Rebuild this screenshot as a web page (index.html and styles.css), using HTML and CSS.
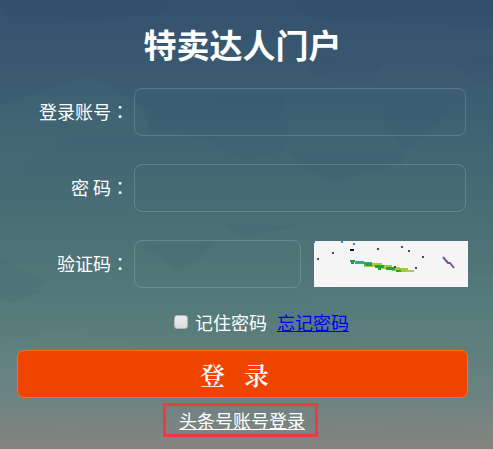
FILE: index.html
```html
<!DOCTYPE html>
<html lang="zh-CN">
<head>
    <meta charset="utf-8">
    <title>特卖达人门户</title>
    <link rel="stylesheet" href="styles.css">
</head>
<body>
    <!-- faceted backdrop -->
    <svg class="backdrop" viewBox="0 0 493 449" preserveAspectRatio="none" aria-hidden="true">
        <g fill="#243f68" fill-opacity="0.06">
            <polygon points="0,0 173,0 160,15 63,22 50,33 10,30"/>
            <polygon points="290,0 493,0 493,28 420,24 310,18"/>
            <polygon points="310,55 385,62 372,84 340,84 308,72"/>
            <polygon points="450,62 493,54 493,80 478,84"/>
            <polygon points="378,108 455,108 404,152"/>
            <polygon points="140,104 285,95 288,136 285,150 245,161 205,138 150,130"/>
            <polygon points="288,152 404,152 402,164 335,181 300,168"/>
            <polygon points="145,246 212,242 202,258 177,271"/>
            <polygon points="225,225 300,225 243,238"/>
            <polygon points="0,260 45,280 40,292 12,302 0,300"/>
        </g>
        <g fill="#8ba690" fill-opacity="0.04">
            <polygon points="0,105 90,75 150,112 145,135 70,138 0,180"/>
            <polygon points="300,290 493,275 493,345 355,345"/>
            <polygon points="0,345 60,330 135,344 160,400 70,430 0,410"/>
            <polygon points="317,400 400,400 380,430 330,425"/>
            <polygon points="430,400 493,400 493,435 445,420"/>
        </g>
    </svg>

    <form class="login">
        <h1>特卖达人门户</h1>

        <div class="row">
            <label for="account">登录账号<span class="colon" lang="zh-TW">：</span></label>
            <input type="text" id="account" class="field">
        </div>
        <div class="row">
            <label for="password">密 码<span class="colon" lang="zh-TW">：</span></label>
            <input type="password" id="password" class="field">
        </div>
        <div class="row row-code">
            <label for="code">验证码<span class="colon" lang="zh-TW">：</span></label>
            <input type="text" id="code" class="field">
            <svg class="captcha" viewBox="0 0 154 46" role="img" aria-label="验证码">
                <rect width="154" height="46" fill="#f5f5f5"/>
                <path d="M50 21h8v1h10v2h10v2h8v1h8v2h6v2h-14v-1h-8v-2h-11v-2h-17z" fill="#a9c832"/>
                <path d="M41 20h9v1h8v3h-8v-1h-9z" fill="#2fae7b"/>
                <path d="M36 19h5v2h-1v2h-3v-2h-1z" fill="#1c9b58"/>
                <path d="M51 22h7v3h-6v-1h-1zM61 24h9v3h-3v2h-3v-2h-3zM72 26h9v3h-9zM82 29h5v2h-5z" fill="#27a33c"/>
                <path d="M93 29h7v2h-7z" fill="#c8b76a"/>
                <path d="M129 16l5 6h2l4 5" fill="none" stroke="#7a529a" stroke-width="2"/>
                <path d="M36 8h4v2h-4z" fill="#15103c"/>
                <g fill="#58406e">
                    <rect x="3" y="17" width="2" height="2"/>
                    <rect x="18" y="11" width="2" height="2"/>
                    <rect x="63" y="7" width="2" height="2"/>
                    <rect x="87" y="5" width="2" height="2"/>
                    <rect x="94" y="9" width="2" height="2"/>
                    <rect x="108" y="15" width="2" height="2"/>
                    <rect x="101" y="26" width="2" height="2"/>
                    <rect x="80" y="25" width="2" height="2"/>
                </g>
                <g fill="#3f7fae">
                    <rect x="27" y="0" width="2" height="2"/>
                    <rect x="39" y="2" width="2" height="2"/>
                    <rect x="0" y="0" width="1" height="2"/>
                </g>
            </svg>
        </div>

        <div class="options">
            <input type="checkbox" id="remember">
            <label for="remember">记住密码</label>
            <a href="#">忘记密码</a>
        </div>

        <button type="submit">登&nbsp;&nbsp; 录</button>

        <a class="other-login" href="#">头条号账号登录</a>
    </form>
</body>
</html>
```
FILE: styles.css
```css
* {
    box-sizing: border-box;
}
html {
    min-height: 100%;
    background: linear-gradient(#34506e 0%, #3d6072 25%, #4a7075 50%, #557b7b 70%, #6b8380 88%, #878380 100%);
}
body {
    margin: 0;
    color: #fff;
    font: 18px/24px "Noto Sans CJK SC", sans-serif;
}
.backdrop {
    position: absolute;
    top: 0;
    left: 0;
    width: 100%;
    height: 100%;
    z-index: -1;
}
.login {
    display: flex;
    flex-direction: column;
    padding: 20px 25px 12px 17px;
}
h1 {
    margin: 0 0 20px;
    font-size: 33px;
    line-height: 48px;
    text-align: center;
}
.row {
    display: grid;
    grid-template-columns: 112px 1fr;
    column-gap: 5px;
    align-items: center;
    margin-bottom: 28px;
    padding-right: 2px;
}
.row-code {
    grid-template-columns: 112px 1fr auto;
    margin-bottom: 16px;
    padding-right: 0;
}
.row label {
    padding-bottom: 2px;
    text-align: right;
    white-space: nowrap;
}
/* the TC face centres the full-width colon in its cell */
.colon {
    font-family: "Noto Sans CJK TC", sans-serif;
}
.field {
    width: 100%;
    min-width: 0;
    height: 48px;
    padding: 0 12px;
    border: 1px solid rgba(255, 255, 255, 0.16);
    border-radius: 8px;
    background: transparent;
    color: #fff;
    font: inherit;
}
.captcha {
    display: block;
    width: 154px;
    height: 46px;
    margin-left: 8px;
}
.options {
    display: flex;
    align-items: center;
    justify-content: center;
    margin-bottom: 10px;
    padding: 6px 0 6px 38px;
}
.options input {
    appearance: none;
    width: 14px;
    height: 14px;
    margin: 0 7px 0 0;
    border: 1px solid #b4b4b4;
    border-radius: 3px;
    background: linear-gradient(#ececec, #dcdcdc);
}
.options input:checked {
    background: #ee4400;
}
.options a {
    margin-left: 10px;
    color: #0000ee;
}
button {
    height: 48px;
    padding: 0 16px 0 0;
    border: 1px solid #ff730e;
    border-radius: 7px;
    background: #ef4300;
    color: #fff;
    font: 600 25px/32px "Noto Serif CJK SC", "Noto Sans CJK SC", serif;
    cursor: pointer;
}
.other-login {
    align-self: center;
    margin: 5px 4px 0 0;
    padding: 2px 10px 2px 13px;
    border: 3px solid #f03a40;
    color: #fff;
}
```
